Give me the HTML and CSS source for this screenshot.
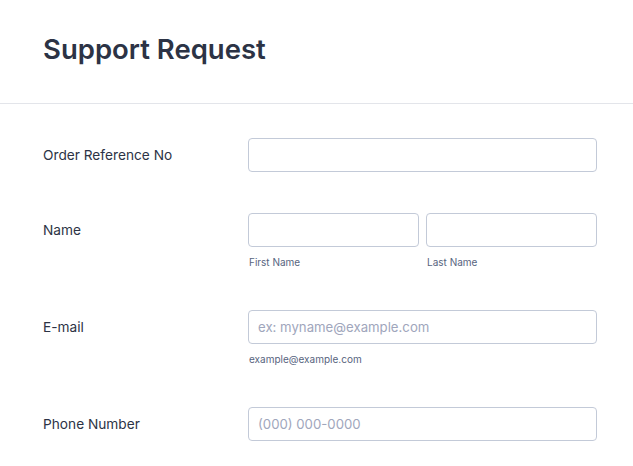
FILE: index.html
```html
<!DOCTYPE html>
<html lang="en">
<head>
    <meta charset="UTF-8">
    <title>Support Request</title>
    <link rel="stylesheet" href="styles.css">
</head>
<body>
    <header class="form-header">
        <h1>Support Request</h1>
    </header>

    <form class="form-list">
        <div class="form-line">
            <label class="form-label" for="order-ref">Order Reference No</label>
            <div class="form-input">
                <input id="order-ref" type="text">
            </div>
        </div>

        <div class="form-line">
            <label class="form-label" for="first-name">Name</label>
            <div class="form-input split">
                <div class="sub-field">
                    <input id="first-name" type="text">
                    <span class="sublabel">First Name</span>
                </div>
                <div class="sub-field">
                    <input id="last-name" type="text">
                    <span class="sublabel">Last Name</span>
                </div>
            </div>
        </div>

        <div class="form-line">
            <label class="form-label" for="email">E-mail</label>
            <div class="form-input">
                <input id="email" type="email" placeholder="ex: myname@example.com">
                <span class="sublabel">example@example.com</span>
            </div>
        </div>

        <div class="form-line">
            <label class="form-label" for="phone">Phone Number</label>
            <div class="form-input">
                <input id="phone" type="tel" placeholder="(000) 000-0000">
            </div>
        </div>
    </form>
</body>
</html>
```

FILE: styles.css
```css
:root {
    --text: #2c3345;
    --sub: #57647e;
    --placeholder: #a0a6bc;
    --border: #c3cad8;
    --divider: #e3e5ea;
}

* { box-sizing: border-box; margin: 0; padding: 0; }

body {
    font-family: 'Inter', 'Liberation Sans', sans-serif;
    background: #fff;
    color: var(--text);
    overflow: hidden;
}

.form-header {
    height: 104px;
    padding: 0 43px;
    display: flex;
    align-items: center;
    border-bottom: 1px solid var(--divider);
}

.form-header h1 {
    font-size: 27.5px;
    font-weight: 600;
    line-height: 32px;
    margin-top: -6px;
}

.form-list {
    padding: 34px 36px 0 43px;
    display: flex;
    flex-direction: column;
    gap: 41px;
}

.form-line {
    display: grid;
    grid-template-columns: 205px 1fr;
}

.form-label {
    font-size: 13.7px;
    line-height: 20px;
    padding-top: 7px;
}

.form-input {
    display: flex;
    flex-direction: column;
}

.form-input.split {
    flex-direction: row;
    gap: 7px;
}

.sub-field {
    flex: 1;
    display: flex;
    flex-direction: column;
}

input {
    height: 34px;
    width: 100%;
    border: 1px solid var(--border);
    border-radius: 4px;
    padding: 0 9px;
    font-family: inherit;
    font-size: 13.2px;
    color: var(--text);
    background: #fff;
    outline: none;
}

input::placeholder {
    color: var(--placeholder);
}

.sublabel {
    margin-top: 8px;
    padding-left: 1px;
    font-size: 10px;
    line-height: 14px;
    color: var(--sub);
}
```
